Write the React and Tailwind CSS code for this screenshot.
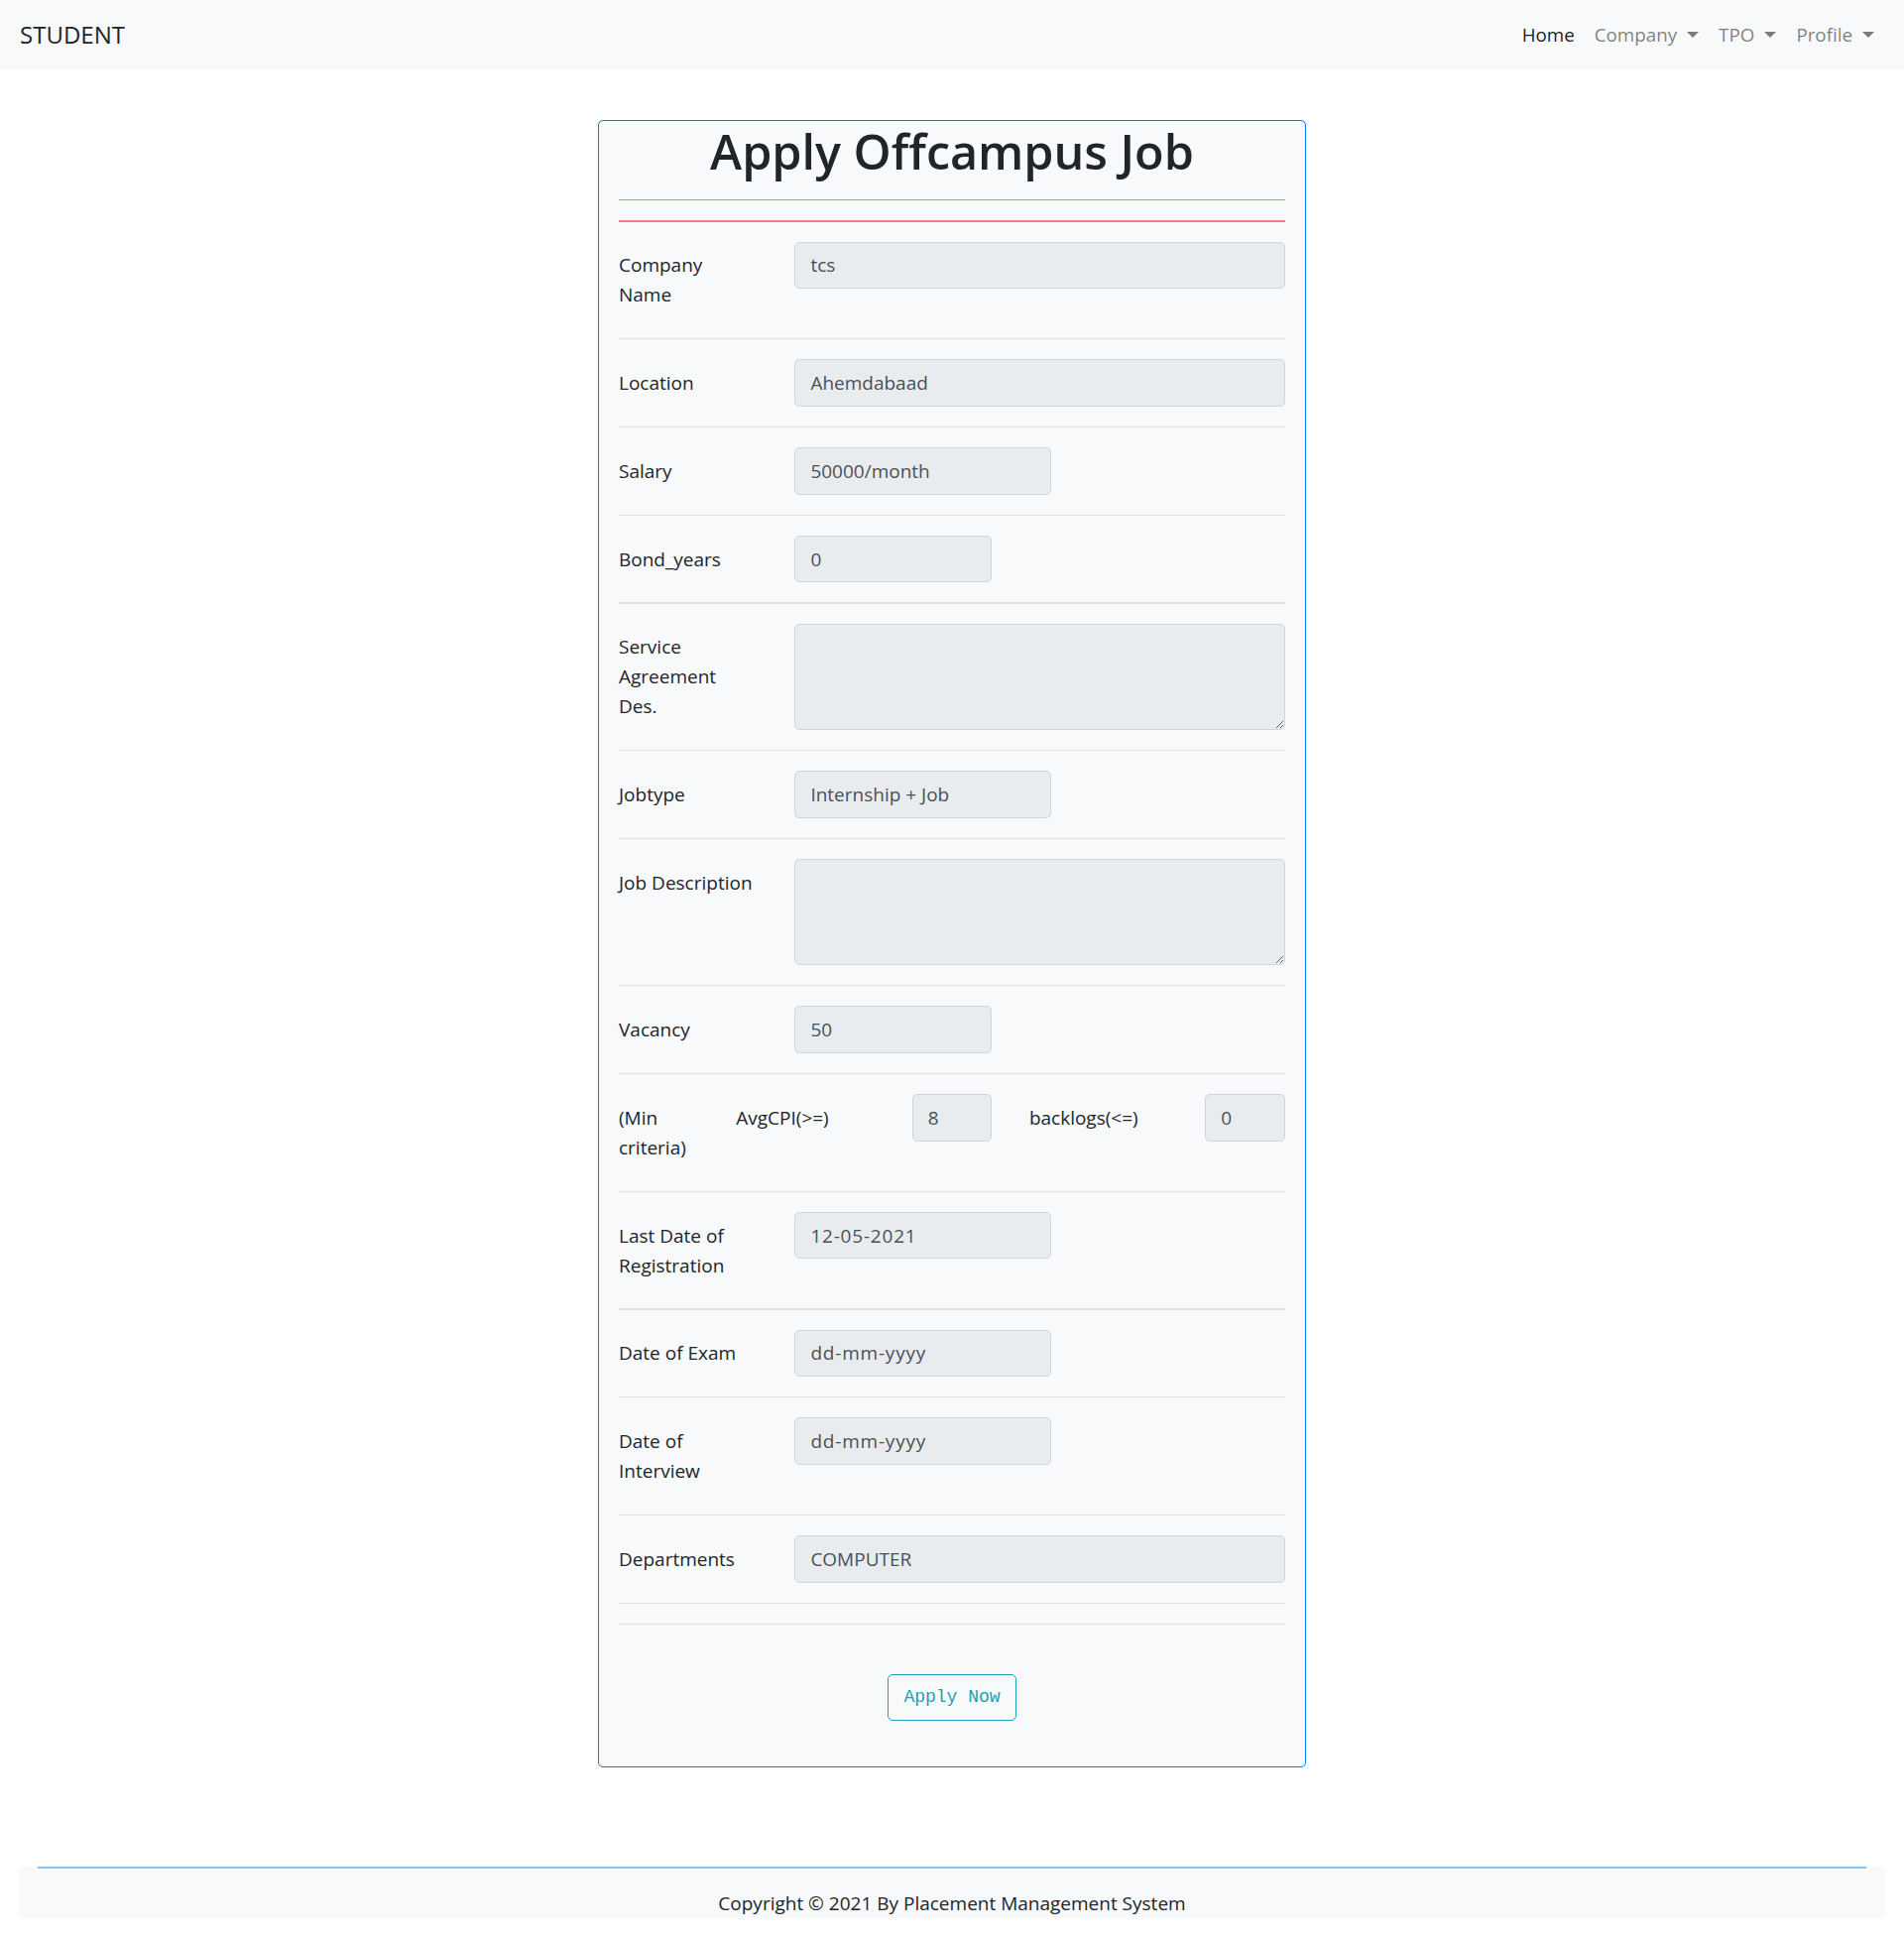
import React from "react";

const FONT = { fontFamily: '"Open Sans", "Noto Sans", sans-serif' };

function Caret() {
  return (
    <span className="ml-[10px] inline-block h-0 w-0 border-x-[6px] border-t-[6px] border-x-transparent border-t-current align-[4px]" />
  );
}

function Divider() {
  return <div className="my-[20px] h-[1.25px] bg-[#dfe0e1]" />;
}

function Label({ children, span = "col-span-3" }) {
  return (
    <div className={`${span} py-[8.75px] pr-[2px] text-[19px] leading-[30px] text-[#212529]`}>{children}</div>
  );
}

function Field({ value, span = "col-span-9", date = false }) {
  return (
    <div className={span}>
      <input
        readOnly
        value={value}
        className={`block h-[47.5px] w-full rounded-[5px] border-[1.25px] border-[#ced4da] bg-[#e9ecef] px-[15px] text-[19px] leading-[30px] text-[#495057] outline-none ${date ? "tracking-[0.8px]" : ""}`}
        style={FONT}
      />
    </div>
  );
}

function Area({ h = "h-[107.5px]" }) {
  return (
    <div className="col-span-9">
      <textarea
        readOnly
        className={`block ${h} w-full rounded-[5px] border-[1.25px] border-[#ced4da] bg-[#e9ecef] px-[15px] py-[7.5px] text-[19px] text-[#495057] outline-none`}
        style={FONT}
      />
    </div>
  );
}

function Row({ children }) {
  return <div className="grid grid-cols-12 items-start gap-x-[37.5px]">{children}</div>;
}

export default function App() {
  return (
    <div className="min-h-[1953px] bg-white" style={FONT}>
      {/* Navbar */}
      <nav className="flex h-[70px] items-center justify-between bg-[#f8f9fa] pl-[20px] pr-[20px]">
        <div className="text-[24px] leading-[30px] text-[#212529]">STUDENT</div>
        <div className="flex items-center text-[18.8px] leading-[30px]">
          <span className="px-[10px] text-[rgba(0,0,0,0.9)]">Home</span>
          <span className="px-[10px] text-[rgba(0,0,0,0.5)]">
            Company
            <Caret />
          </span>
          <span className="px-[10px] text-[rgba(0,0,0,0.5)]">
            TPO
            <Caret />
          </span>
          <span className="px-[10px] text-[rgba(0,0,0,0.5)]">
            Profile
            <Caret />
          </span>
        </div>
      </nav>

      {/* Card */}
      <div className="mx-auto mt-[51px] w-[714px] rounded-[5px] border border-[#007bff] bg-[#f8f9fa] px-[20px] pb-[46px]">
        <h1 className="text-center text-[48.5px] font-semibold leading-[60px] text-[#212529]">Apply Offcampus Job</h1>
        <div className="mt-[19px] h-[1.25px] bg-[#f08080]" />
        <div className="mt-[20px] h-[1.25px] bg-[#f08080]" />
        <div className="pt-[20px]">
          <Row>
            <Label>Company Name</Label>
            <Field value="tcs" />
          </Row>
          <Divider />
          <Row>
            <Label>Location</Label>
            <Field value="Ahemdabaad" />
          </Row>
          <Divider />
          <Row>
            <Label>Salary</Label>
            <Field value="50000/month" span="col-span-5" />
          </Row>
          <Divider />
          <Row>
            <Label>Bond_years</Label>
            <Field value="0" span="col-span-4" />
          </Row>
          <Divider />
          <Row>
            <Label>Service Agreement Des.</Label>
            <Area />
          </Row>
          <Divider />
          <Row>
            <Label>Jobtype</Label>
            <Field value="Internship + Job" span="col-span-5" />
          </Row>
          <Divider />
          <Row>
            <Label>Job Description</Label>
            <Area h="h-[107px]" />
          </Row>
          <Divider />
          <Row>
            <Label>Vacancy</Label>
            <Field value="50" span="col-span-4" />
          </Row>
          <Divider />
          <Row>
            <Label span="col-span-2">(Min criteria)</Label>
            <Label span="col-span-3">AvgCPI(&gt;=)</Label>
            <Field value="8" span="col-span-2" />
            <Label span="col-span-3">backlogs(&lt;=)</Label>
            <Field value="0" span="col-span-2" />
          </Row>
          <Divider />
          <Row>
            <Label>Last Date of Registration</Label>
            <Field value="12-05-2021" span="col-span-5" date />
          </Row>
          <Divider />
          <Row>
            <Label>Date of Exam</Label>
            <Field value="dd-mm-yyyy" span="col-span-5" date />
          </Row>
          <Divider />
          <Row>
            <Label>Date of Interview</Label>
            <Field value="dd-mm-yyyy" span="col-span-5" date />
          </Row>
          <Divider />
          <Row>
            <Label>Departments</Label>
            <Field value="COMPUTER" />
          </Row>
          <div className="mt-[20px] h-[1.25px] bg-[#dfe0e1]" />
          <div className="mt-[20px] h-[1.25px] bg-[#dfe0e1]" />
        </div>
        <div className="mt-[49.5px] flex justify-center">
          <button
            className="h-[47.5px] rounded-[5px] border-[1.25px] border-[#17a2b8] bg-transparent px-[15px] text-[18px] leading-[30px] text-[#17a2b8]"
            style={{ fontFamily: '"Liberation Mono", "DejaVu Sans Mono", monospace' }}
          >
            Apply Now
          </button>
        </div>
      </div>

      {/* Footer */}
      <footer className="mx-[19px] mt-[100px] bg-[#f8f9fa]">
        <div className="mx-[19px] h-[1.5px] bg-[#86c5f2]" />
        <div className="pt-[20.5px] text-center text-[19px] leading-[30px] text-[#212529]">
          Copyright © 2021 By Placement Management System
        </div>
      </footer>
    </div>
  );
}
